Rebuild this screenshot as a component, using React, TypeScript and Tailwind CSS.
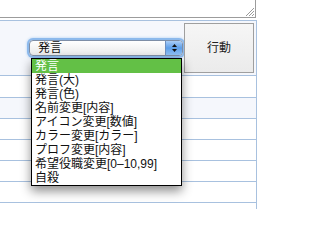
import React from "react";

const items = [
  "発言(大)",
  "発言(色)",
  "名前変更[内容]",
  "アイコン変更[数値]",
  "カラー変更[カラー]",
  "プロフ変更[内容]",
  "希望役職変更[0–10,99]",
  "自殺",
];

const font = { fontFamily: '"Liberation Sans", "Noto Sans CJK JP", sans-serif' };

export default function App() {
  return (
    <div
      className="relative w-[268px] h-[209px] overflow-hidden bg-white text-[12px] text-[#111]"
      style={font}
    >
      {/* textarea remnant */}
      <div className="relative h-[18px] w-[256px] border-r border-b border-[#9c9c9c] bg-white">
        <svg className="absolute right-[1px] bottom-[1px]" width="9" height="9" viewBox="0 0 9 9">
          <path d="M9 1 L1 9 M9 4 L4 9 M9 7 L7 9" stroke="#9a9a9a" strokeWidth="1" />
        </svg>
      </div>
      <div className="h-[2px]" />
      {/* table */}
      <div className="w-[257px] border-r border-[#a8c1df]">
        <div className="relative h-[56px] border-t border-b border-[#a8c1df] bg-[#f5f7fc]">
          {/* select */}
          <div className="absolute left-[29px] top-[19px] w-[154px] h-[16px] rounded-[4px] shadow-[0_0_0_2px_#8cb9ec,0_0_3px_2px_#a9cdf3] border border-[#7e8ea6] bg-gradient-to-b from-white to-[#e9e9e9] flex">
            <div className="flex-1 pl-[8px] leading-[14px]">発言</div>
            <div className="w-[17px] h-full rounded-r-[3px] bg-gradient-to-b from-[#a9cdf7] via-[#5d9ee8] to-[#8fc0f3] border-l border-[#6d8fbf] flex flex-col items-center justify-center gap-[2px]">
              <svg width="5" height="3" viewBox="0 0 5 3"><path d="M2.5 0 L5 3 L0 3 Z" fill="#111" /></svg>
              <svg width="5" height="3" viewBox="0 0 5 3"><path d="M0 0 L5 0 L2.5 3 Z" fill="#111" /></svg>
            </div>
          </div>
          {/* button */}
          <div className="absolute left-[184px] top-[2px] w-[70px] h-[50px] border border-[#9f9f9f] bg-gradient-to-b from-[#f6f6f6] to-[#ebebeb] flex items-center justify-center text-[#222]">
            行動
          </div>
        </div>
        <div className="h-[22px] border-b border-[#a8c1df]" />
        <div className="h-[21px] border-b border-[#a8c1df] bg-[#f5f7fc]" />
        <div className="h-[21px] border-b border-[#a8c1df]" />
        <div className="h-[21px] border-b border-[#a8c1df]" />
        <div className="h-[21px] border-b border-[#a8c1df]" />
        <div className="h-[21px] border-b border-[#a8c1df]" />
        <div className="h-[21px]" />
      </div>
      {/* dropdown list */}
      <div className="absolute left-[31px] top-[58px] w-[151px] border border-black bg-white shadow-[0_5px_10px_rgba(0,0,0,0.45)]">
        <div className="h-[14px] leading-[14px] pl-[3px] bg-[#63c046] text-white">発言</div>
        {items.map((t) => (
          <div key={t} className="h-[14px] leading-[14px] pl-[3px] whitespace-nowrap">
            {t}
          </div>
        ))}
      </div>
    </div>
  );
}
